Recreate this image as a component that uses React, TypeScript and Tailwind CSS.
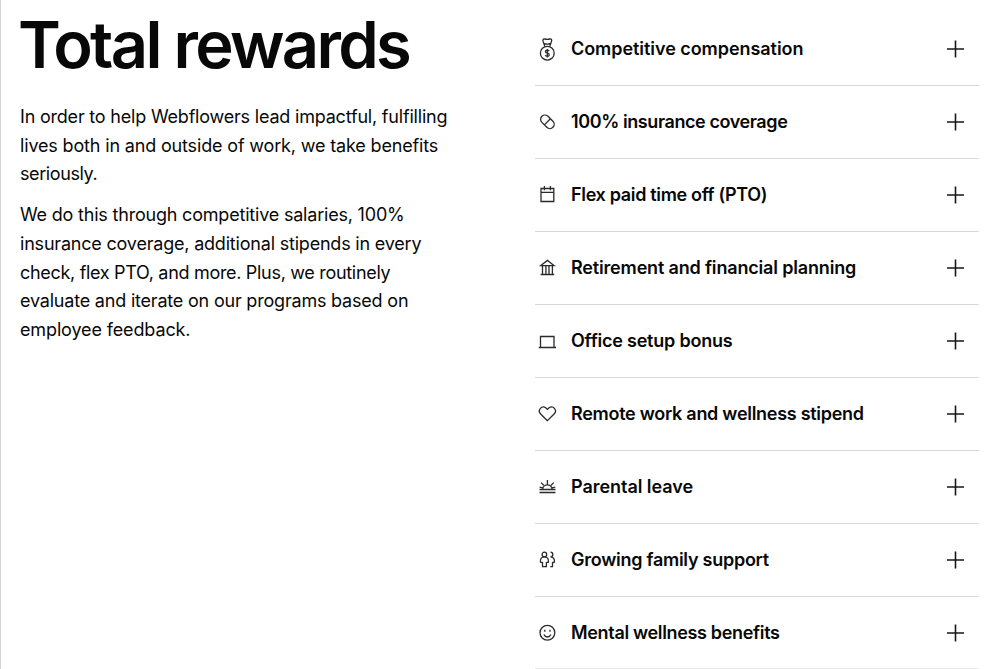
import type { ReactNode } from "react";

type Benefit = { label: string; tracking: string; icon: ReactNode };

const benefits: Benefit[] = [
  {
    label: "Competitive compensation",
    tracking: "tracking-[-0.05px]",
    icon: (
      <>
        <circle cx="12.3" cy="16.2" r="6.9" />
        <path d="M9.8 9.4 8.3 5C7.3 2.8 8.2 1.7 9.8 2c1.7.4 3.3.4 5 0 1.6-.3 2.5.8 1.5 3l-1.5 4.4M8.8 6.3c2.3 1.1 4.7 1.1 7 0" />
        <path d="M14.2 14.2c-.4-.7-1-1-1.9-1-2.4 0-2.6 2.7 0 3 2.7.4 2.5 3.1 0 3.1-1 0-1.7-.4-2.1-1.1M12.3 12v8.4" />
      </>
    ),
  },
  {
    label: "100% insurance coverage",
    tracking: "tracking-[-0.41px]",
    icon: (
      <g transform="rotate(45 12.4 11.8)">
        <rect x="4.6" y="7.5" width="15.6" height="8.6" rx="4.3" />
        <path d="M12.4 7.5v8.6" />
      </g>
    ),
  },
  {
    label: "Flex paid time off (PTO)",
    tracking: "tracking-[-0.33px]",
    icon: <path d="M6 5.5h12.8v13H6zM6 9.3h12.8M9.4 3v4.3M15.4 3v4.3" />,
  },
  {
    label: "Retirement and financial planning",
    tracking: "tracking-[-0.17px]",
    icon: <path d="m5.8 9.6 6.6-5.2L19 9.6zM5.6 18.5h13.6M7.5 9.6v8.9M10.9 9.6v8.9M14 9.6v8.9M17.4 9.6v8.9" />,
  },
  {
    label: "Office setup bonus",
    tracking: "tracking-[-0.22px]",
    icon: <path d="M3.8 18.5H21M5.5 18.5v-11H19v11" />,
  },
  {
    label: "Remote work and wellness stipend",
    tracking: "tracking-[-0.28px]",
    icon: <path d="M12.4 18.7 5.7 12C2 8.2 6.8 2.6 11 6.1l1.4 1.3 1.4-1.3c4.2-3.5 9 2.1 5.3 5.9z" />,
  },
  {
    label: "Parental leave",
    tracking: "tracking-[-0.04px]",
    icon: (
      <path d="M4.5 14.5h16M4.5 17.5h16M7.7 14.5c0-6.2 9.4-6.2 9.4 0M12.4 5v4.5M6.1 7.6l2.6 2.6M18.7 7.6l-2.6 2.6M4.6 12.2l3.3.6M20.2 12.2l-3.3.6" />
    ),
  },
  {
    label: "Growing family support",
    tracking: "tracking-[-0.26px]",
    icon: (
      <>
        <circle cx="9.4" cy="6.5" r="2.3" />
        <path d="M7.5 18.7v-4.2l-2-.3C5 10.700 6.600 8.800 9.400 8.800s4.500 1.900 4 5.400l-2 .3v4.200zM15.500 4.200c3.100.2 3.100 4.400 0 4.600 3.100.2 4.200 2.100 3.900 5.400l-1.900.3v4.200h-2.200" />
      </>
    ),
  },
  {
    label: "Mental wellness benefits",
    tracking: "tracking-[-0.33px]",
    icon: (
      <>
        <circle cx="12.4" cy="11.8" r="7.4" />
        <path d="M8.9 13.5c1.4 3.3 5.6 3.3 7 0M9.8 8.700v2M15 8.700v2" />
      </>
    ),
  },
];

function BenefitRow({ label, tracking, icon }: Benefit) {
  return (
    <button
      type="button"
      className="flex h-[73px] w-full items-center border-b border-[#d8d8d8] text-left last:h-[72px] last:border-[#ebebeb]"
    >
      <svg className="size-6 shrink-0" viewBox="0 0 24 24" fill="none" stroke="#2b2b2b" strokeWidth="1.3">
        {icon}
      </svg>
      <span className={`ml-3 flex-1 whitespace-nowrap text-lg font-semibold leading-6 ${tracking}`}>{label}</span>
      <svg className="mr-3 size-6 shrink-0" viewBox="0 0 24 24" fill="none" stroke="#171717" strokeWidth="1.6">
        <path d="M12.5 3.5v17M4 12h17" />
      </svg>
    </button>
  );
}

export default function App() {
  return (
    <main className="flex h-[669px] w-[1003px] overflow-hidden border-l border-[#d4d4d4] bg-white font-['Inter',sans-serif] text-[#080808]">
      <section className="w-[515px] shrink-0 pl-[19px]">
        <h1 className="-ml-0.5 mt-1.5 whitespace-nowrap text-[65px] font-semibold leading-[78px] tracking-[-2.65px]">
          Total rewards
        </h1>
        <div className="mt-[19px] whitespace-nowrap text-lg leading-[28.7px] tracking-[-0.2px]">
          <p>
            In order to help Webflowers lead impactful, fulfilling
            <br />
            <span className="tracking-[-0.16px]">lives both in and outside of work, we take benefits</span>
            <br />
            <span className="tracking-[-0.4px]">seriously.</span>
          </p>
          <p className="mt-3">
            We do this through competitive salaries, 100%
            <br />
            insurance coverage, additional stipends in every
            <br />
            <span className="tracking-[-0.31px]">check, flex PTO, and more. Plus, we routinely</span>
            <br />
            evaluate and iterate on our programs based on
            <br />
            <span className="tracking-[-0.13px]">employee feedback.</span>
          </p>
        </div>
      </section>
      <section className="ml-[19px] w-[444px] shrink-0 pt-[13px]">
        {benefits.map((benefit) => (
          <BenefitRow key={benefit.label} {...benefit} />
        ))}
      </section>
    </main>
  );
}
